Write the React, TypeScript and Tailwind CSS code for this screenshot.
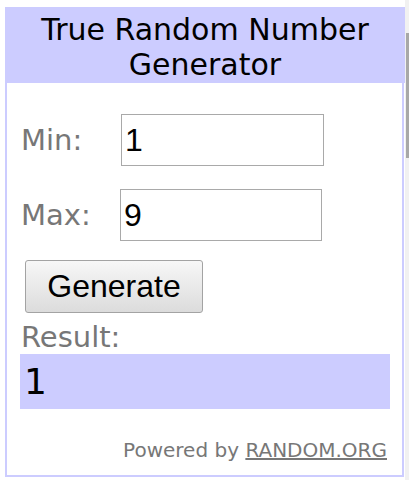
import React, { useState } from 'react';

const App: React.FC = () => {
  const [min, setMin] = useState('1');
  const [max, setMax] = useState('9');
  const [result, setResult] = useState('1');

  const generate = () => {
    const lo = parseInt(min, 10);
    const hi = parseInt(max, 10);
    if (isNaN(lo) || isNaN(hi) || hi < lo) return;
    setResult(String(lo + Math.floor(Math.random() * (hi - lo + 1))));
  };

  return (
    <div className="w-[409px] h-[480px] bg-white flex overflow-hidden leading-[normal] font-['DejaVu_Sans',Verdana,sans-serif]">
      <div className="w-[405px] pt-[7px] pl-[5px]">
        {/* Header */}
        <div className="w-[400px] h-[76px] bg-[#ccccff] pt-[5px] text-center text-[30px] text-black">
          True Random Number
          <br />
          Generator
        </div>

        {/* Body */}
        <div className="w-[399px] border-x-2 border-b-2 border-[#ccccff] pt-[31px] pb-[13px]">
          <div className="flex items-center pl-[14px]">
            <label className="w-[100px] text-[29px] text-[#777777]">Min:</label>
            <input
              value={min}
              onChange={(e) => setMin(e.target.value)}
              className="w-[203px] h-[52px] border border-[#a9a9a9] px-[3px] text-[32px] text-black outline-none font-['Liberation_Sans',Arial,sans-serif]"
            />
          </div>

          <div className="flex items-center pl-[14px] mt-[23px]">
            <label className="w-[99px] text-[29px] text-[#777777]">Max:</label>
            <input
              value={max}
              onChange={(e) => setMax(e.target.value)}
              className="w-[202px] h-[52px] border border-[#a9a9a9] px-[3px] text-[32px] text-black outline-none font-['Liberation_Sans',Arial,sans-serif]"
            />
          </div>

          <button
            onClick={generate}
            className="block ml-[18px] mt-[19px] w-[178px] h-[53px] rounded-[3px] border border-[#a3a3a3] bg-gradient-to-b from-[#f7f7f7] to-[#dcdcdc] text-[32px] text-black font-['Liberation_Sans',Arial,sans-serif]"
          >
            Generate
          </button>

          <div className="pl-[14px] mt-[7px] text-[29px] text-[#777777]">Result:</div>

          <div className="ml-[13px] w-[370px] h-[55px] bg-[#ccccff] flex items-center pl-[4px] text-[36px] text-black">
            {result}
          </div>

          <div className="mt-[29px] pr-[15px] text-right text-[20px] text-[#777777]">
            Powered by <span className="underline">RANDOM.ORG</span>
          </div>
        </div>
      </div>

      {/* Scrollbar */}
      <div className="w-[4px] h-full bg-[#f1f1f1] pt-[33px] pl-[1px]">
        <div className="w-[3px] h-[125px] bg-[#a8a8a8]" />
      </div>
    </div>
  );
};

export default App;
